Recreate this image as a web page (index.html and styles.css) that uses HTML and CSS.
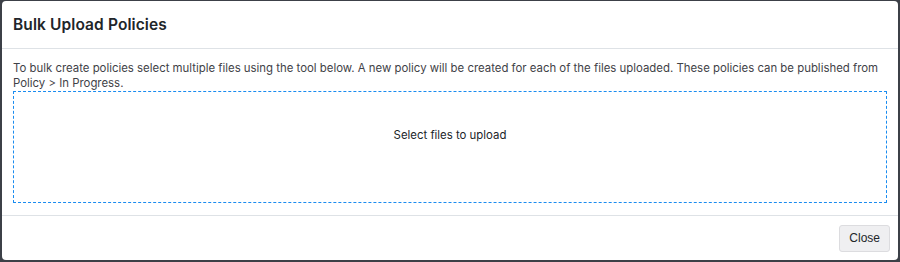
FILE: index.html
```html
<!DOCTYPE html>
<html lang="en">
<head>
    <meta charset="UTF-8">
    <title>Bulk Upload Policies</title>
    <link rel="stylesheet" href="styles.css">
</head>
<body>
    <div class="modal">
        <div class="modal-header">
            <h2 class="modal-title">Bulk Upload Policies</h2>
        </div>
        <div class="modal-body">
            <p class="intro">To bulk create policies select multiple files using the tool below. A new policy will be created for each of the files uploaded. These policies can be published from Policy &gt; In Progress.</p>
            <div class="dropzone">Select files to upload</div>
        </div>
        <div class="modal-footer">
            <button class="btn-close">Close</button>
        </div>
    </div>
</body>
</html>
```

FILE: styles.css
```css
:root {
    --backdrop: #3c4047; --border: #dee2e6; --text: #212529;
    --muted: #3f4247; --accent: #1a8cf0; --btn-bg: #efeff1;
}
html, body { margin: 0; height: 100%; }
body { background: var(--backdrop); padding: 1px 2px 2px 2px; box-sizing: border-box; font-family: Inter, "Open Sans", sans-serif; color: var(--text); }
.modal { background: #fff; border-radius: 4px; height: 100%; display: flex; flex-direction: column; }
.modal-header { height: 48px; border-bottom: 1px solid var(--border); display: flex; align-items: center; padding: 0 11px; box-sizing: border-box; }
.modal-title { margin: 0; font-size: 15.5px; font-weight: 600; letter-spacing: 0.1px; }
.modal-body { padding: 12px 11px 12px 11px; border-bottom: 1px solid var(--border); }
.intro { margin: 0; font-size: 11.4px; line-height: 15px; color: var(--muted); }
.dropzone { border: 1px dashed var(--accent); height: 74px; padding-top: 36px; display: flex; justify-content: center; align-items: flex-start; font-size: 11.4px; line-height: 15px; color: var(--text); }
.modal-footer { flex: 1; display: flex; align-items: center; justify-content: flex-end; padding: 0 8px; }
.btn-close { background: var(--btn-bg); border: 1px solid #dcdcdf; border-radius: 3px; height: 27px; padding: 0 9px; font-family: "Liberation Sans", Arial, sans-serif; font-size: 12px; color: var(--text); }
```
